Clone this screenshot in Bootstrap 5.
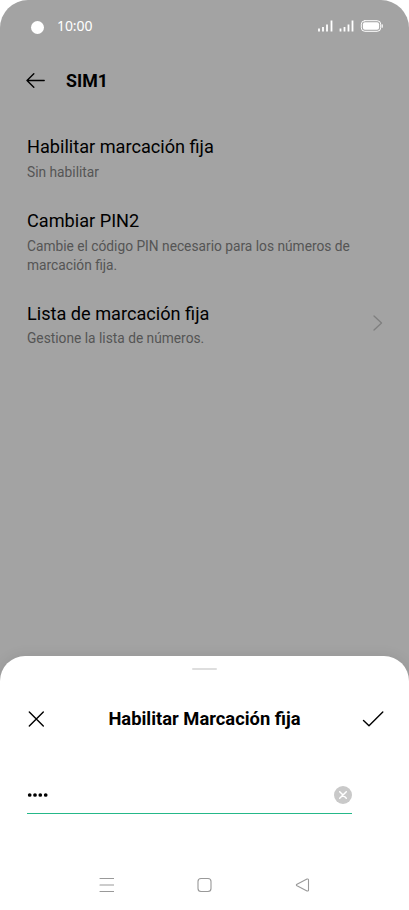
<!DOCTYPE html>
<html lang="es">
<head>
<meta charset="utf-8">
<meta name="viewport" content="width=device-width, initial-scale=1">
<title>SIM1</title>
<link href="https://cdn.jsdelivr.net/npm/bootstrap@5.3.0/dist/css/bootstrap.min.css" rel="stylesheet">
<style>
body{font-family:Roboto,sans-serif;background:#fff;color:#000}
svg{display:block;flex:none;fill:none;stroke-linecap:round;stroke-linejoin:round}
.phone{height:910px;background:#a3a3a3;border-radius:28px 28px 0 0}
.status-bar{height:52px;padding:0 26px 0 31px}
.camera{width:13px;height:13px;margin-top:2px;background:#fff}
.clock{font:400 14px/20px "Noto Sans",sans-serif;margin-left:13px;letter-spacing:-.1px}
.app-bar{height:57px;padding-left:26px}
.app-title{font-size:17.8px;line-height:24px;font-weight:700;margin-left:21px}
.settings{padding:26px 26px 0 27px;gap:27.5px}
.item-title{font-size:18.15px;line-height:24px;margin-bottom:4px}
.item-note{font-size:13.75px;line-height:18.5px;color:#555}
.item-link .item-note{margin-top:-.7px}
.item-link svg{margin-top:-2px}
.sheet{height:254px;border-radius:25px 25px 0 0;box-shadow:0 0 14px rgba(0,0,0,.09)}
.grip{width:25px;height:2px;background:#dedede;margin-top:12px}
.sheet-head{height:24px;margin-top:37px;padding:0 25px 0 28px}
.sheet-title{font-size:18.35px;line-height:24px;font-weight:700;padding-left:2px}
.pin-field{height:38px;width:325px;margin:45px 0 0 27px;border-bottom:1px solid #25b889}
.nav-keys{height:50px;padding:0 99px}
</style>
<script src="https://cdn.jsdelivr.net/npm/bootstrap@5.3.0/dist/js/bootstrap.bundle.min.js"></script>
</head>
<body>
<div class="phone d-flex flex-column overflow-hidden">
  <header class="status-bar d-flex align-items-center text-white">
    <span class="camera rounded-circle"></span>
    <span class="clock">10:00</span>
    <svg class="ms-auto" width="66" height="14" viewBox="0 0 66 14">
      <g stroke="#fff" stroke-width="1.8" stroke-linecap="butt"><path d="M2 12.500V9.500M6 12.500V8M10 12.500V5.500M14.500 12.500V1.500"/><path d="M23.500 12.500V9.500M27.500 12.500V8M31.500 12.500V5.500M35.500 12.500V1.500"/></g>
      <rect x="44.300" y="1.700" width="19.400" height="10.600" rx="3.500" stroke="#fff"/>
      <rect x="45.900" y="3.300" width="16.200" height="7.400" rx="2" fill="#fff"/>
      <path d="M65.200 5.800v2.400" stroke="#fff" stroke-width="1.200"/>
    </svg>
  </header>
  <div class="app-bar d-flex align-items-center">
    <svg width="19" height="16" viewBox="0 0 19 16" stroke="#000" stroke-width="1.400"><path d="M18.200 7.500H1M7.800 .8L1 7.500l6.800 6.700"/></svg>
    <h1 class="app-title mb-0">SIM1</h1>
  </div>
  <main class="settings d-flex flex-column">
    <section>
      <h2 class="item-title fw-normal">Habilitar marcación fija</h2>
      <p class="item-note mb-0">Sin habilitar</p>
    </section>
    <section>
      <h2 class="item-title fw-normal">Cambiar PIN2</h2>
      <p class="item-note mb-0">Cambie el código PIN necesario para los números de<br>marcación fija.</p>
    </section>
    <section class="item-link d-flex align-items-center justify-content-between">
      <div>
        <h2 class="item-title fw-normal">Lista de marcación fija</h2>
        <p class="item-note mb-0">Gestione la lista de números.</p>
      </div>
      <svg width="10" height="16" viewBox="0 0 10 16" stroke="#7f7f7f" stroke-width="1.300"><path d="M1 1l7.500 7L1 15"/></svg>
    </section>
  </main>
  <div class="sheet bg-white mt-auto d-flex flex-column">
    <div class="grip rounded-pill align-self-center"></div>
    <div class="sheet-head d-flex align-items-center justify-content-between">
      <svg width="17" height="16" viewBox="0 0 17 16" stroke="#000" stroke-width="1.400"><path d="M1.300 1L15.300 15M15.300 1L1.300 15"/></svg>
      <h2 class="sheet-title mb-0">Habilitar Marcación fija</h2>
      <svg width="22" height="16" viewBox="0 0 22 16" stroke="#000" stroke-width="1.400"><path d="M1.500 9.500L7 14.800L20.800 1"/></svg>
    </div>
    <div class="pin-field d-flex align-items-center justify-content-between">
      <svg width="22" height="4" viewBox="0 0 22 4"><g fill="#000"><circle cx="2.700" cy="2" r="1.850"/><circle cx="8" cy="2" r="1.850"/><circle cx="13.300" cy="2" r="1.850"/><circle cx="18.700" cy="2" r="1.850"/></g></svg>
      <svg width="18" height="18" viewBox="0 0 18 18"><circle cx="9" cy="9" r="9" fill="#c9c9c9"/><path d="M5.700 5.700l6.600 6.600M12.300 5.700l-6.600 6.600" stroke="#fff" stroke-width="1.500"/></svg>
    </div>
    <nav class="nav-keys d-flex align-items-center justify-content-between mt-auto">
      <svg width="15" height="16" viewBox="0 0 15 16" stroke="#999" stroke-width="1.100" stroke-linecap="butt"><path d="M1 1.500h14M1 8h14M1 14.500h14"/></svg>
      <svg width="15" height="16" viewBox="0 0 15 16" stroke="#999" stroke-width="1.100"><rect x="1" y="1.500" width="13" height="13" rx="3"/></svg>
      <svg width="15" height="16" viewBox="0 0 15 16" stroke="#999" stroke-width="1.100"><path d="M12 2.100L2 7.200q-1.300.8 0 1.600L12 13.900q1.500.5 1.500-1V3.100q0-1.500-1.500-1z"/></svg>
    </nav>
  </div>
</div>
</body>
</html>
